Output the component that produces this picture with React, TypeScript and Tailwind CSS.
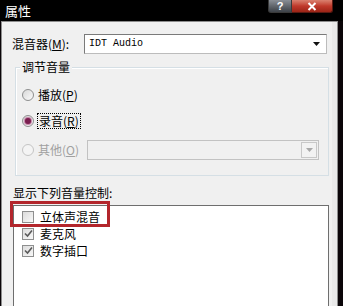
import React from "react";

const cjk = { fontFamily: '"Noto Sans CJK SC", "Noto Sans", sans-serif' };

function Radio({ checked, disabled }: { checked?: boolean; disabled?: boolean }) {
  return (
    <span
      className={
        "flex w-[12px] h-[12px] shrink-0 items-center justify-center rounded-full border " +
        (disabled ? "border-[#c4c4c4] bg-[#f4f4f4]" : "border-[#8e8f8f] bg-gradient-to-br from-[#d8d8d8] to-[#fbfbfb]")
      }
    >
      {checked && <span className="block w-[6px] h-[6px] rounded-full bg-[#7a1e4f] shadow-[0_0_1px_1px_#c07aa0]" />}
    </span>
  );
}

function Check({ checked }: { checked?: boolean }) {
  return (
    <span className="flex w-[12px] h-[12px] shrink-0 items-center justify-center border border-[#8e8f8f] bg-gradient-to-br from-[#dcdcdc] to-[#f8f8f8]">
      {checked && (
        <svg width="9" height="9" viewBox="0 0 9 9">
          <path d="M1 4.5 L3.5 7 L8 1.5" fill="none" stroke="#5a5a5a" strokeWidth="1.6" />
        </svg>
      )}
    </span>
  );
}

export default function App() {
  return (
    <div className="relative w-[343px] h-[306px] overflow-hidden bg-[#0a0508] text-[12px] text-black" style={cjk}>
      {/* title bar */}
      <div className="flex h-[21px] items-start bg-black">
        <span className="pl-[5px] pt-[2px] text-[13px] leading-[17px] text-white">属性</span>
        <div className="ml-auto mr-[10px] flex">
          <div className="flex h-[13px] w-[24px] items-center justify-center rounded-bl-[3px] border border-t-0 border-[#3a3a3a] bg-gradient-to-b from-[#8a8f96] to-[#3d4248] text-[11px] font-bold leading-none text-white" style={{ fontFamily: '"Liberation Sans", sans-serif' }}>
            ?
          </div>
          <div className="flex h-[13px] w-[41px] items-center justify-center rounded-br-[3px] border border-t-0 border-l-0 border-[#5a1a12] bg-gradient-to-b from-[#d9806f] via-[#c0392b] to-[#9c2416]">
            <svg width="10" height="9" viewBox="0 0 10 9">
              <path d="M1.5 1 L8.5 8 M8.5 1 L1.5 8" stroke="#fff" strokeWidth="2" />
            </svg>
          </div>
        </div>
      </div>

      {/* body */}
      <div className="ml-[1px] w-[337px] h-[285px] border-l border-t border-r border-[#8d8d8d] bg-[#f0f0f0]">
        <div className="border-r-[5px] border-[#e9e9e9] h-full">
          {/* mixer row */}
          <div className="flex items-center pl-[10px] pt-[12px]">
            <span className="w-[72px] leading-[14px]">
              混音器(<span className="underline">M</span>):
            </span>
            <div className="flex h-[20px] w-[243px] items-center justify-between border border-[#7a7a7a] border-b-[#bcbcbc] border-r-[#bcbcbc] bg-white pl-[4px] pr-[6px]">
              <span className="text-[10px] leading-none" style={{ fontFamily: '"Liberation Mono", monospace' }}>IDT Audio</span>
              <svg width="7" height="4" viewBox="0 0 7 4">
                <path d="M0 0 H7 L3.5 4 Z" fill="#111" />
              </svg>
            </div>
          </div>

          {/* group box */}
          <div className="ml-[13px] mt-[13px] w-[314px] h-[109px] border border-[#d5dfe5] shadow-[inset_1px_1px_0_#fff]">
            <span className="-mt-[8px] ml-[4px] block w-fit bg-[#f0f0f0] px-[2px] leading-[14px]">调节音量</span>
            <div className="flex flex-col pl-[6px]">
              <div className="mt-[14px] flex h-[14px] items-center gap-[4px]">
                <Radio />
                <span className="leading-[14px]">
                  播放(<span className="underline">P</span>)
                </span>
              </div>
              <div className="mt-[12px] flex h-[14px] items-center gap-[3px]">
                <Radio checked />
                <span className="border border-dotted border-black px-[1px] leading-[14px]">
                  录音(<span className="underline">R</span>)
                </span>
              </div>
              <div className="mt-[12px] flex h-[20px] items-center">
                <Radio disabled />
                <span className="ml-[4px] w-[49px] leading-[14px] text-[#a0a0a0]">
                  其他(<span className="underline">O</span>)
                </span>
                <div className="flex h-[20px] w-[232px] items-center justify-end border border-[#c2c2c2] bg-[#f0f0f0] pr-[1px]">
                  <div className="flex h-[16px] w-[16px] items-center justify-center border border-[#c8c8c8] bg-[#f2f2f2]">
                    <svg width="7" height="4" viewBox="0 0 7 4">
                      <path d="M0 0 H7 L3.5 4 Z" fill="#a8a8a8" />
                    </svg>
                  </div>
                </div>
              </div>
            </div>
          </div>

          {/* list label */}
          <div className="ml-[11px] mt-[10px] leading-[14px]">显示下列音量控制:</div>
          <div className="ml-[11px] mt-[5px] w-[316px] h-[110px] border border-[#6e6e6e] border-b-0 bg-white pl-[8px] pt-[2px]">
            {[
              { t: "立体声混音", c: false },
              { t: "麦克风", c: true },
              { t: "数字插口", c: true },
            ].map((it) => (
              <div key={it.t} className="flex h-[17px] items-center gap-[6px]">
                <Check checked={it.c} />
                <span className="leading-[14px]">{it.t}</span>
              </div>
            ))}
          </div>
        </div>
      </div>

      {/* red highlight */}
      <div className="absolute left-[10px] top-[201px] w-[100px] h-[26px] border-[3px] border-[#b3262c]" />
    </div>
  );
}
